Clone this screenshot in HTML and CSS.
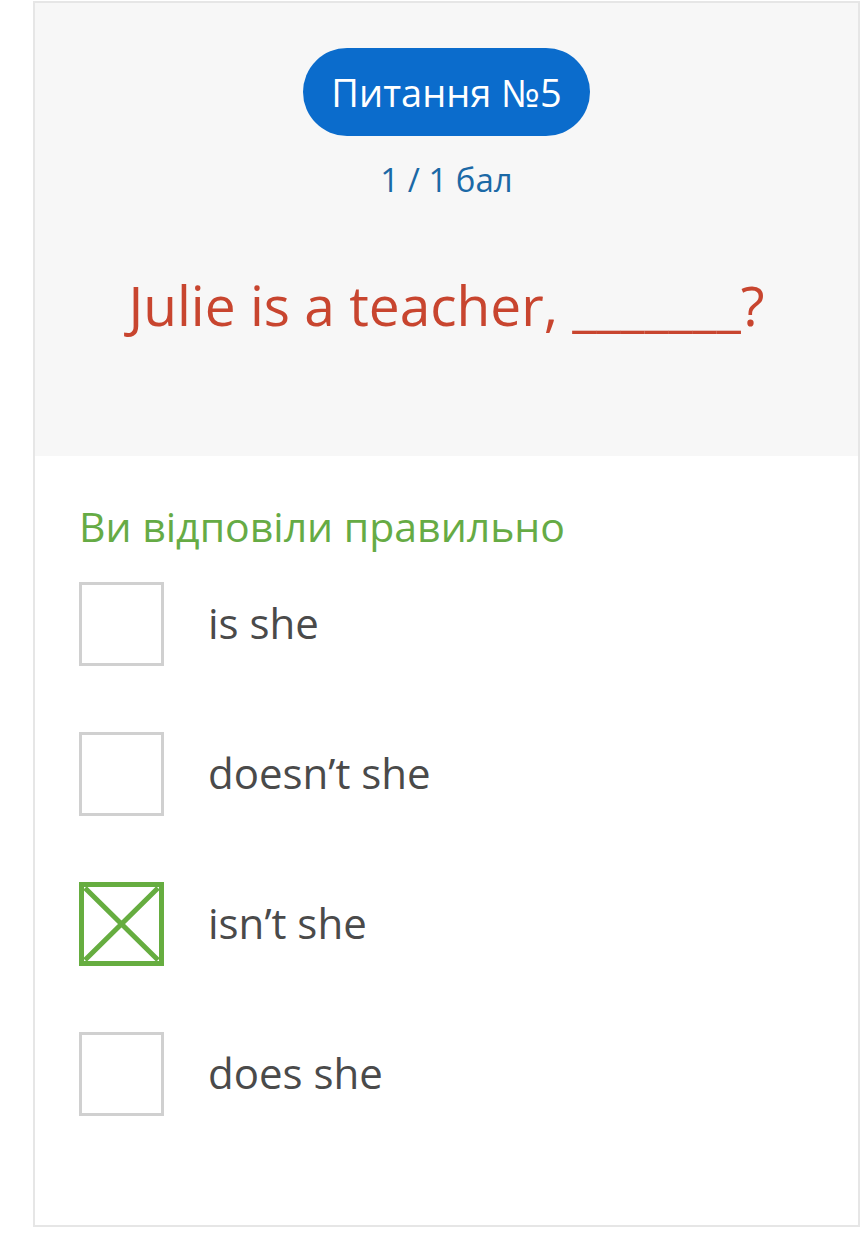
FILE: index.html
```html
<!DOCTYPE html>
<html lang="uk">
<head>
  <meta charset="UTF-8" />
  <meta name="viewport" content="width=device-width, initial-scale=1.0"/>
  <title>Питання №5</title>
  <link rel="stylesheet" href="styles.css">
</head>
<body>
  <div class="card">
    <div class="question-head">
      <div class="badge">Питання №5</div>
      <div class="score">1 / 1 бал</div>
      <div class="question">Julie is a teacher, _______?</div>
    </div>

    <div class="answers">
      <div class="result">Ви відповіли правильно</div>

      <div class="option">
        <span class="box"></span>
        <span class="label">is she</span>
      </div>
      <div class="option">
        <span class="box"></span>
        <span class="label">doesn’t she</span>
      </div>
      <div class="option">
        <span class="box checked">
          <svg viewBox="0 0 75 74" width="75" height="74">
            <path d="M1 1 L74 73 M74 1 L1 73" stroke="#66ad40" stroke-width="5" fill="none"/>
          </svg>
        </span>
        <span class="label">isn’t she</span>
      </div>
      <div class="option">
        <span class="box"></span>
        <span class="label">does she</span>
      </div>
    </div>
  </div>
</body>
</html>
```

FILE: styles.css
```css
* {
  margin: 0;
  padding: 0;
  box-sizing: border-box;
}
body {
  font-family: 'Open Sans', 'Noto Sans', sans-serif;
  background: #fff;
  padding: 1px 4px 0 33px;
}
.card {
  border: 2px solid #e6e6e6;
  height: 1226px;
  background: #fff;
}
.question-head {
  background: #f7f7f7;
  height: 453px;
  padding-top: 45px;
  display: flex;
  flex-direction: column;
  align-items: center;
}
.badge {
  background: #0b6ccc;
  color: #fff;
  font-size: 38px;
  height: 88px;
  line-height: 88px;
  padding: 0 28px;
  border-radius: 44px;
}
.score {
  margin-top: 22px;
  color: #1b69a6;
  font-size: 33px;
  line-height: 44px;
}
.question {
  margin-top: 73px;
  color: #c8452f;
  font-size: 55px;
  line-height: 60px;
}
.answers {
  padding: 44px 0 0 44px;
}
.result {
  color: #66ab45;
  font-size: 41px;
  line-height: 52px;
  margin-bottom: 30px;
}
.option {
  display: flex;
  align-items: center;
  height: 84px;
  margin-bottom: 66px;
}
.box {
  width: 85px;
  height: 84px;
  border: 3px solid #d0d0d0;
  background: #fff;
  flex-shrink: 0;
}
.box.checked {
  border: 5px solid #66ad40;
}
.box svg {
  display: block;
  width: 75px;
  height: 74px;
}
.label {
  margin-left: 44px;
  color: #4a4a4a;
  font-size: 42px;
  line-height: 56px;
  padding-bottom: 2px;
}
```
